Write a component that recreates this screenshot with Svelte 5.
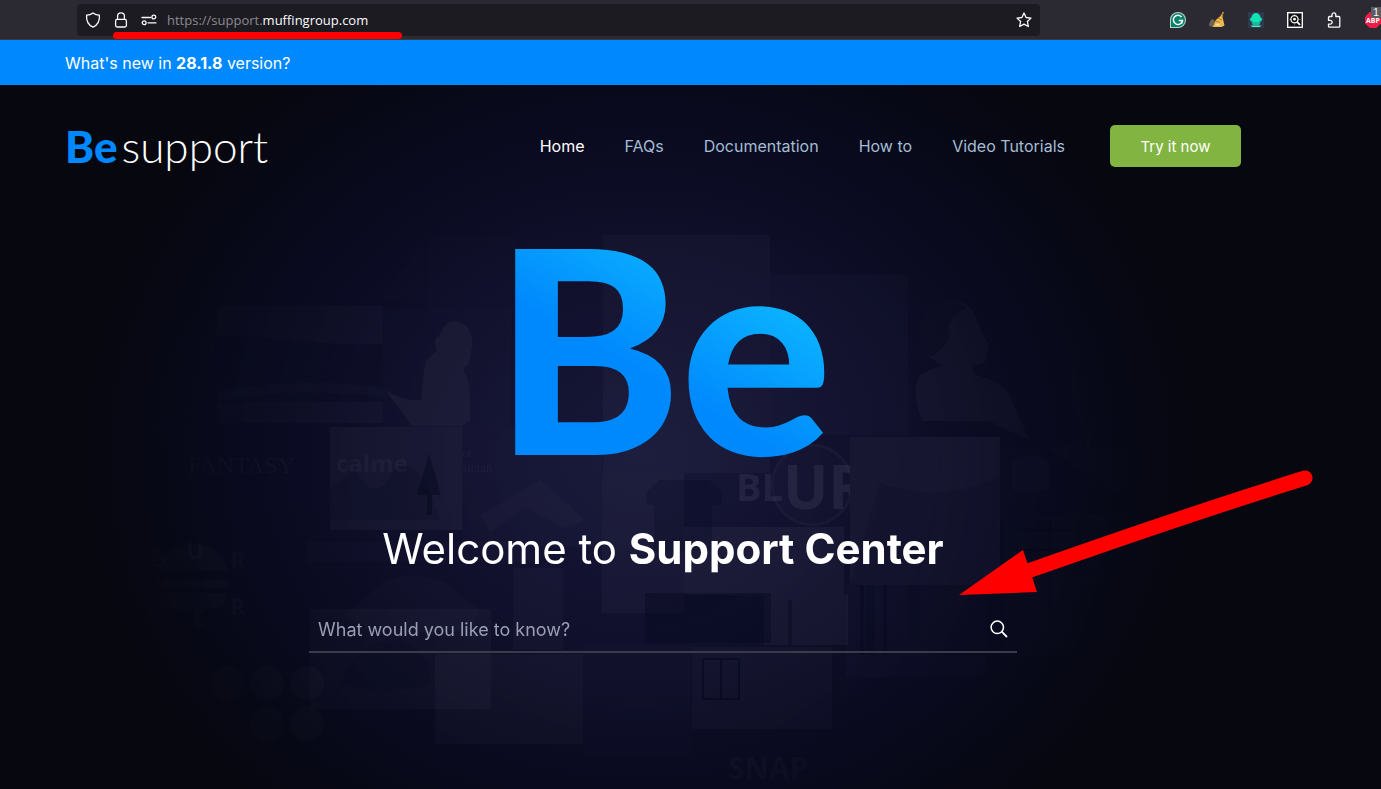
<script lang="ts">
  const links = [
    { label: "Home", href: "#home", active: true },
    { label: "FAQs", href: "#faqs" },
    { label: "Documentation", href: "#documentation" },
    { label: "How to", href: "#how-to" },
    { label: "Video Tutorials", href: "#video-tutorials" },
  ];

  // x, y, width, height, brightness
  const tiles = [
    [257, 160, 168, 55, 0.01],
    [427, 150, 90, 80, 0.012],
    [217, 221, 166, 117, 0.032],
    [383, 225, 128, 118, 0.016],
    [190, 338, 140, 80, 0.01],
    [330, 342, 132, 103, 0.05],
    [462, 342, 140, 120, 0.02],
    [603, 150, 167, 238, 0.03],
    [770, 190, 138, 160, 0.025],
    [910, 221, 116, 131, 0.005],
    [602, 388, 82, 140, 0.04],
    [684, 442, 160, 68, 0.05],
    [1000, 364, 150, 70, 0.014],
    [1003, 430, 140, 140, 0.022],
    [307, 457, 232, 20, 0.02],
    [310, 524, 181, 100, 0.04],
    [435, 569, 148, 90, 0.04],
    [513, 483, 50, 82, 0.03],
    [764, 510, 84, 50, 0.05],
    [846, 500, 140, 92, 0.02],
    [692, 562, 140, 82, 0.035],
    [583, 560, 108, 110, 0.014],
    [840, 570, 170, 60, 0.012],
  ];

  const rays = Array.from({ length: 22 }, (_, i) => 120 + i * 8);

  let query = $state("");
</script>

<div class="window">
  <div class="toolbar">
    <div class="urlbar">
      <svg width="16" height="16" viewBox="0 0 16 16" class="line">
        <path d="M8 .9c1.900 1.500 4 2.200 6.400 2.300.5 5.300-1.600 9.600-6.400 12C3.200 12.800 1.100 8.500 1.600 3.200 4 3.100 6.100 2.400 8 .9z" />
      </svg>
      <svg width="16" height="16" viewBox="0 0 16 16" class="line">
        <rect x="2.600" y="7.400" width="10.800" height="7.600" rx="1.500" />
        <path d="M4.600 7.400V4.300a3.400 3.400 0 0 1 6.800 0v3.100" />
      </svg>
      <svg width="16" height="16" viewBox="0 0 16 16" class="line">
        <path d="M1 5.500h8.500M7 10.800h8" />
        <circle cx="12.800" cy="5" r="1.900" />
        <circle cx="3.200" cy="10.800" r="1.900" />
      </svg>
      <span class="url">https://support.<b>muffingroup.com</b></span>
      <button class="icon-button" type="button" aria-label="Bookmark this page">
        <svg width="16" height="16" viewBox="0 0 16 16" class="line">
          <path d="M8 1l2.100 4.500 4.900.6-3.600 3.400.9 5L8 12.100l-4.300 2.400.9-5L1 6.100l4.900-.6z" />
        </svg>
      </button>
      <div class="underline"></div>
    </div>

    <div class="extensions">
      <button class="icon-button" type="button" aria-label="Writing assistant">
        <svg width="16" height="16" viewBox="0 0 16 16">
          <path d="M0 16V8a8 8 0 1 1 8 8z" fill="#b7d5cf" />
          <path d="M1 15V8a7 7 0 1 1 7 7z" fill="#0a7f6b" />
          <path d="M11.500 4.900A4.600 4.600 0 1 0 12.500 8.500H8.800M12.600 8.500l-1 2.900" fill="none" stroke="#fff" stroke-width="1.500" />
        </svg>
      </button>
      <button class="icon-button" type="button" aria-label="Clean up">
        <svg width="16" height="16" viewBox="0 0 16 16">
          <path d="M0 14c.2-4 1.500-6 3.500-7L6 9l-1 6z" fill="#6c6557" />
          <path d="M14.500 0l-1 5 2 8.500-3 1.500H3.500c2-2 1.800-5 3.500-7 2-2.500 5-3 6.500-8z" fill="#efb951" />
          <path d="M14.700 0l-2.200 4.500M6 9l5 1.500M9 6l4 2" stroke="#bd7a19" fill="none" />
          <path d="M6 13l3-2 2 3z" fill="#ffe09a" />
        </svg>
      </button>
      <button class="icon-button" type="button" aria-label="Cupcake">
        <svg width="16" height="16" viewBox="0 0 16 16">
          <rect width="16" height="16" fill="#30384d" />
          <path d="M2 7.500c0-1 .6-1.800 1.400-2C3.700 3 5.700 1 8 1s4.300 2 4.600 4.500c.8.2 1.400 1 1.400 2 0 1.600-2 2.800-6 2.800S2 9.100 2 7.500z" fill="#12e3b4" />
          <path d="M3.500 10h9l-1.300 3H4.800z" fill="#0fbda0" />
          <path d="M2.500 13.500h11L11.500 15h-7z" fill="#53f0cf" />
        </svg>
      </button>
      <button class="icon-button" type="button" aria-label="Image search">
        <svg width="16" height="16" viewBox="0 0 16 16">
          <rect x=".7" y=".7" width="14.600" height="14.600" fill="#101014" stroke="#f7f7f7" stroke-width="1.400" />
          <path d="M1.500 7.500H4M7.500 1.500V3M12 7.500h2.500M7.500 12v2.500" stroke="#555" />
          <circle cx="7.500" cy="7.200" r="3.600" fill="none" stroke="#f7f7f7" stroke-width="1.300" />
          <circle cx="7.500" cy="7.200" r="1.400" fill="#f7f7f7" />
          <path d="M10 9.800l3 3" stroke="#f7f7f7" stroke-width="1.700" />
        </svg>
      </button>
      <button class="icon-button" type="button" aria-label="Extensions">
        <svg width="16" height="16" viewBox="0 0 16 16" class="line">
          <path d="M2.500 8V5.500a1 1 0 0 1 1-1H6V2.800a1.900 1.900 0 0 1 3.800 0v1.700h3a1 1 0 0 1 1 1v8.700a1 1 0 0 1-1 1H3.500a1 1 0 0 1-1-1v-2h1.700a1.900 1.900 0 0 0 0-3.900H2.500z" />
        </svg>
      </button>
      <button class="icon-button blocker" type="button" aria-label="Ad blocker, 1 blocked">
        <svg width="16" height="16" viewBox="0 0 16 16">
          <path d="M4.700 0h6.600L16 4.700v6.600L11.300 16H4.700L0 11.300V4.700z" fill="#ed1e45" />
          <text x="8" y="11" text-anchor="middle" class="abp">ABP</text>
        </svg>
        <span class="badge">1</span>
      </button>
    </div>
  </div>

  <a class="promo" href="#whats-new">What's new in&nbsp;<b>28.1.8</b>&nbsp;version?</a>

  <div class="site">
    <svg class="collage" viewBox="0 0 1381 704" preserveAspectRatio="xMidYMin slice" aria-hidden="true">
      <defs>
        <radialGradient id="glow" gradientUnits="userSpaceOnUse" cx="640" cy="370" r="560" gradientTransform="translate(0 50) scale(1 0.860)">
          <stop offset="0" stop-color="#171738" />
          <stop offset="0.350" stop-color="#11112e" />
          <stop offset="0.700" stop-color="#090a1e" />
          <stop offset="1" stop-color="#06070f" />
        </radialGradient>
        <radialGradient id="fade" gradientUnits="userSpaceOnUse" cx="640" cy="380" r="580">
          <stop offset="0" stop-color="#fff" />
          <stop offset="0.500" stop-color="#ccc" />
          <stop offset="1" stop-color="#000" />
        </radialGradient>
        <mask id="vignette">
          <rect width="1381" height="704" fill="url(#fade)" />
        </mask>
      </defs>
      <rect width="1381" height="704" fill="url(#glow)" />
      <g mask="url(#vignette)">
        {#each tiles as [x, y, width, height, level]}
          <rect {x} {y} {width} {height} fill="#d0d0f0" fill-opacity={level} />
        {/each}

        <!-- sunburst -->
        <g stroke="#fff" stroke-opacity="0.040">
          {#each rays as deg}
            <path d="M25 0H70" transform="translate(200 300) rotate({deg})" />
          {/each}
        </g>

        <!-- forest and hills -->
        <path d="M217 250q80 5 120 9h46v58H217z" fill="#04051a" fill-opacity="0.350" />
        <path d="M217 306q90-15 166-3v9q-90-10-166 4z" fill="#fff" fill-opacity="0.020" />
        <path d="M330 404l25-20q20 40 40 0 22-18 45 51H330z" fill="#05061e" fill-opacity="0.250" />
        <path d="M429 368l12 42h-9v20h-5v-20h-10z" fill="#04051a" fill-opacity="0.500" />

        <!-- seated figure -->
        <path d="M439 252q5-17 18-16 17 5 15 26l-3 17q-7 5-5 8 8 10 6 49l-8 5h-50l-27-36q20 12 36 10l4-38 12-12q-4-8 0-13z" fill="#fff" fill-opacity="0.045" />

        <!-- portrait from behind -->
        <path d="M918 250q2-23 16-31 28-10 40 8l8 22 7 10-4 18q-6 4-13 3l3 10q32 7 37 26l17 38-25-10-14-8h-68q-14-38 1-48l19-8q-28-15-24-30z" fill="#fff" fill-opacity="0.040" />
        <path d="M918 250q2-23 16-31 20-8 33 4-22 8-18 29-8 15-18 20-17-10-13-22z" fill="#02031a" fill-opacity="0.400" />
        <path d="M1012 376q20-10 37 0v28q-18 8-37 0z" fill="#fff" fill-opacity="0.025" />
        <path d="M1048 364l60-18 35 15v35l-30 12z" fill="#fff" fill-opacity="0.014" />
        <path d="M1070 255q20-18 37 0l-5 75-14 35-17-50z" fill="#fff" fill-opacity="0.015" />

        <!-- table, lamp and guitar -->
        <path d="M660 395h50l12 12v13h-10v46h-58v-46h-8v-13z" fill="#02031a" fill-opacity="0.200" />
        <path d="M480 430l60-35 45 40-20 8-40-20-35 25z" fill="#fff" fill-opacity="0.025" />
        <circle cx="812" cy="400" r="40" fill="#fff" fill-opacity="0.015" stroke="#fff" stroke-opacity="0.035" stroke-width="3" />

        <!-- burger -->
        <path d="M158 486q5-26 35-27 30 1 35 27zM156 495h72v8h-72zM160 508h66q2 15-15 16h-38q-14-2-13-16z" fill="#fff" fill-opacity="0.040" />

        <!-- houses and street -->
        <path d="M645 508h126v50H645z" fill="#03041a" fill-opacity="0.400" />
        <path d="M1003 430h135v110h-135zM865 500h10v70h-10zM908 498h12v55h-12z" fill="#02031a" fill-opacity="0.200" />
        <path d="M790 515v45M862 500v70M885 500v70" stroke="#02031a" stroke-opacity="0.350" stroke-width="4" />
        <g fill="none" stroke="#02031a" stroke-opacity="0.500" stroke-width="2">
          <path d="M703 574h36v40h-36zM721 574v40" />
          <path d="M1015 445h100M1015 465h100M1015 485h100M1050 435v90M1080 435v90" stroke-opacity="0.300" />
        </g>
        <path d="M345 530l40-35q30-10 60 2l35 28-10 20-90 5z" fill="#fff" fill-opacity="0.018" />
        <path d="M340 600q15-45 60-45 35 15 30 45-45 10-90 0z" fill="#02031a" fill-opacity="0.180" />

        <g fill="#fff" fill-opacity="0.035">
          <circle cx="227" cy="598" r="17" />
          <circle cx="267" cy="598" r="17" />
          <circle cx="307" cy="598" r="17" />
          <circle cx="267" cy="639" r="17" />
          <circle cx="307" cy="639" r="17" />
        </g>

        <g class="ghost">
          <text x="188" y="388" class="serif">FANTASY</text>
          <text x="336" y="387" class="soft">calme</text>
          <text x="462" y="372" class="small">cc</text>
          <text x="462" y="387" class="small">sician</text>
          <text x="736" y="416" class="blur">BL<tspan dy="8" class="big">UR</tspan></text>
          <text x="150" y="482" class="soft">B</text>
          <text x="186" y="474" class="soft">U</text>
          <text x="230" y="484" class="soft">R</text>
          <text x="148" y="534" class="soft">G</text>
          <text x="192" y="542" class="soft">E</text>
          <text x="230" y="530" class="soft">R</text>
          <text x="728" y="694" class="snap">SNAP</text>
        </g>

        <path d="M850 352h150v148H850z" fill="#15152f" />
        <path d="M850 352h150v40q-60 28-120 6l-30 102z" fill="#fff" fill-opacity="0.020" />
      </g>
    </svg>

    <header>
      <a class="logo" href="#home"><b>Be</b><span>support</span></a>
      <nav>
        {#each links as link}
          <a href={link.href} class:active={link.active}>{link.label}</a>
        {/each}
      </nav>
      <button class="cta" type="button">Try it now</button>
    </header>

    <main>
      <div class="brand">Be</div>
      <h1>Welcome to <b>Support Center</b></h1>
      <form class="search" onsubmit={(e) => e.preventDefault()}>
        <input type="text" aria-label="Search" placeholder="What would you like to know?" bind:value={query} />
        <button class="icon-button" type="submit" aria-label="Search">
          <svg width="18" height="18" viewBox="0 0 18 18" fill="none" stroke="#fff" stroke-width="1.500">
            <circle cx="7.300" cy="7.300" r="6.200" />
            <path d="M11.700 11.700l5.300 5.300" stroke-width="1.800" />
          </svg>
        </button>
      </form>
    </main>
  </div>

  <svg class="arrow" width="360" height="130" viewBox="955 468 360 130" aria-hidden="true">
    <path d="M1305 478Q1180 517 1028 571" fill="none" stroke="#f00" stroke-width="15" stroke-linecap="round" />
    <path d="M959 595l64-45 14 42z" fill="#f00" />
  </svg>
</div>

<style>
  :global(body) {
    margin: 0;
    background: #06070e;
  }

  .window {
    position: relative;
    display: flex;
    flex-direction: column;
    min-height: 100vh;
    overflow: hidden;
    font-family: Inter, "Open Sans", sans-serif;
    color: #fff;
  }

  a {
    color: inherit;
    text-decoration: none;
  }

  svg {
    display: block;
  }

  .line {
    fill: none;
    stroke: #fbfbfe;
    stroke-width: 1.3;
    stroke-linejoin: round;
    stroke-linecap: round;
  }

  .icon-button {
    display: block;
    padding: 0;
    border: 0;
    background: none;
    cursor: pointer;
  }

  .toolbar {
    display: flex;
    align-items: center;
    gap: 130px;
    height: 40px;
    padding-left: 77px;
    box-sizing: border-box;
    background: #2b2a33;
    border-bottom: 1px solid #3a3940;
  }

  .urlbar {
    position: relative;
    flex: 1;
    display: flex;
    align-items: center;
    gap: 12px;
    height: 32px;
    padding: 0 8px;
    background: #1c1b22;
    border-radius: 4px;
  }

  .url {
    flex: 1;
    margin-left: -2px;
    font-family: "Open Sans", "Noto Sans", sans-serif;
    font-size: 13px;
    color: #8b8a90;
  }

  .url b {
    font-weight: 400;
    color: #fbfbfe;
  }

  .underline {
    position: absolute;
    left: 36px;
    bottom: -3px;
    width: 289px;
    height: 7px;
    border-radius: 4px;
    background: #f00;
  }

  .extensions {
    display: flex;
    gap: 23px;
  }

  .blocker {
    position: relative;
  }

  .abp {
    font-family: "Open Sans", sans-serif;
    font-size: 7px;
    font-weight: 700;
    fill: #fff;
  }

  .badge {
    position: absolute;
    top: -5px;
    right: 0;
    width: 10px;
    height: 11px;
    background: #5c5c61;
    color: #fff;
    font-size: 10px;
    line-height: 11px;
  }

  .promo {
    display: flex;
    align-items: center;
    height: 45px;
    padding-left: 65px;
    background: #0088ff;
    font-size: 16px;
  }

  .site {
    position: relative;
    flex: 1;
    padding: 40px 55px 40px 0;
  }

  .collage {
    position: absolute;
    inset: 0;
    width: 100%;
    height: 100%;
  }

  .ghost {
    fill: #d0d0f0;
    fill-opacity: 0.05;
  }

  .serif {
    font: 24px "Liberation Serif", serif;
  }

  .small {
    font: 13px "Liberation Serif", serif;
  }

  .soft {
    font: 700 24px "Open Sans", sans-serif;
  }

  .blur {
    font: 700 38px "Open Sans", sans-serif;
    fill-opacity: 0.09;
  }

  .big {
    font-size: 60px;
  }

  .snap {
    font: 700 30px "Open Sans", sans-serif;
    fill-opacity: 0.04;
  }

  header {
    position: relative;
    display: flex;
    align-items: center;
    height: 42px;
    padding: 0 85px 0 65px;
  }

  .logo {
    display: flex;
    align-items: baseline;
    gap: 4px;
    font-family: Lato, sans-serif;
    font-size: 44px;
    line-height: 40px;
  }

  .logo b {
    font-family: "Lato Black", Lato, sans-serif;
    font-weight: 900;
    color: #0088ff;
  }

  .logo span {
    font-weight: 300;
  }

  nav {
    flex: 1;
    display: flex;
    justify-content: flex-end;
    gap: 40px;
    margin-right: 45px;
    font-size: 16px;
    color: #a3bdd4;
  }

  .active {
    color: #fff;
  }

  .cta {
    width: 131px;
    height: 42px;
    border: 0;
    border-radius: 5px;
    background: #81b441;
    color: #fff;
    font-family: inherit;
    font-size: 15px;
    cursor: pointer;
  }

  main {
    position: relative;
    display: flex;
    flex-direction: column;
    align-items: center;
    padding-top: 60px;
  }

  .brand {
    font-family: "Lato Black", Lato, sans-serif;
    font-size: 284px;
    font-weight: 900;
    line-height: 236px;
    background: linear-gradient(30deg, #0088fd 40%, #0db8ff 80%);
    background-clip: text;
    color: transparent;
  }

  h1 {
    margin: 56px 0 0;
    font-size: 42px;
    font-weight: 400;
    line-height: 60px;
  }

  h1 b {
    font-weight: 700;
  }

  .search {
    display: flex;
    align-items: center;
    width: 708px;
    max-width: 100%;
    height: 46px;
    margin-top: 28px;
    padding: 0 9px;
    box-sizing: border-box;
    border-bottom: 2px solid #3c3b49;
  }

  input {
    flex: 1;
    padding: 0;
    border: 0;
    outline: 0;
    background: none;
    color: #fff;
    font-family: inherit;
    font-size: 18px;
  }

  input::placeholder {
    color: #9a9fb5;
    opacity: 1;
  }

  .arrow {
    position: absolute;
    top: 468px;
    left: 955px;
  }
</style>
